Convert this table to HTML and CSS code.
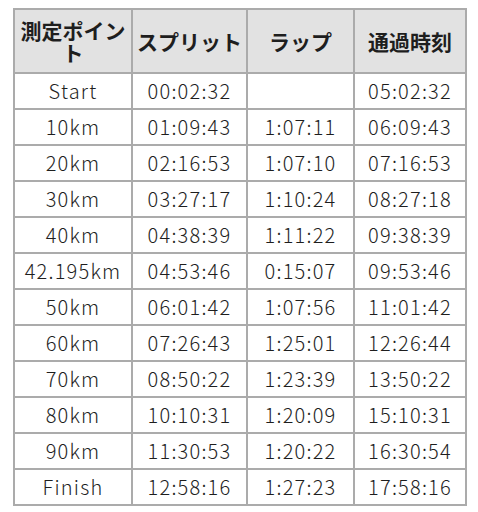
FILE: index.html
```html
<!DOCTYPE html>
<html lang="ja">
<head>
<meta charset="utf-8">
<link rel="stylesheet" href="styles.css">
</head>
<body>
<table class="splits">
  <colgroup>
    <col class="c1"><col class="c2"><col class="c3"><col class="c4">
  </colgroup>
  <thead>
    <tr><th>測定ポイント</th><th>スプリット</th><th>ラップ</th><th>通過時刻</th></tr>
  </thead>
  <tbody>
    <tr><td>Start</td><td>00:02:32</td><td></td><td>05:02:32</td></tr>
    <tr><td>10km</td><td>01:09:43</td><td>1:07:11</td><td>06:09:43</td></tr>
    <tr><td>20km</td><td>02:16:53</td><td>1:07:10</td><td>07:16:53</td></tr>
    <tr><td>30km</td><td>03:27:17</td><td>1:10:24</td><td>08:27:18</td></tr>
    <tr><td>40km</td><td>04:38:39</td><td>1:11:22</td><td>09:38:39</td></tr>
    <tr><td>42.195km</td><td>04:53:46</td><td>0:15:07</td><td>09:53:46</td></tr>
    <tr><td>50km</td><td>06:01:42</td><td>1:07:56</td><td>11:01:42</td></tr>
    <tr><td>60km</td><td>07:26:43</td><td>1:25:01</td><td>12:26:44</td></tr>
    <tr><td>70km</td><td>08:50:22</td><td>1:23:39</td><td>13:50:22</td></tr>
    <tr><td>80km</td><td>10:10:31</td><td>1:20:09</td><td>15:10:31</td></tr>
    <tr><td>90km</td><td>11:30:53</td><td>1:20:22</td><td>16:30:54</td></tr>
    <tr><td>Finish</td><td>12:58:16</td><td>1:27:23</td><td>17:58:16</td></tr>
  </tbody>
</table>
</body>
</html>
```

FILE: styles.css
```css
html, body {
  margin: 0;
  background: #fff;
}
body {
  padding: 8px 0 0 13px;
  font-family: "Noto Sans CJK JP", "Noto Sans", sans-serif;
  color: #1e1e1e;
}
.splits {
  border-collapse: collapse;
  table-layout: fixed;
  width: 454px;
  font-size: 20px;
}
.c1 { width: 118px; }
.c2 { width: 115px; }
.c3 { width: 107px; }
.c4 { width: 112px; }
.splits th,
.splits td {
  border: 2px solid #ababab;
  text-align: center;
  padding: 0;
}
.splits th {
  background: #e2e2e2;
  font-weight: bold;
  font-size: 21px;
  height: 62px;
  line-height: 22px;
  padding: 0 4px;
}
.splits td {
  height: 34px;
  line-height: 24px;
  font-weight: 300;
  letter-spacing: 1.2px;
}
```
